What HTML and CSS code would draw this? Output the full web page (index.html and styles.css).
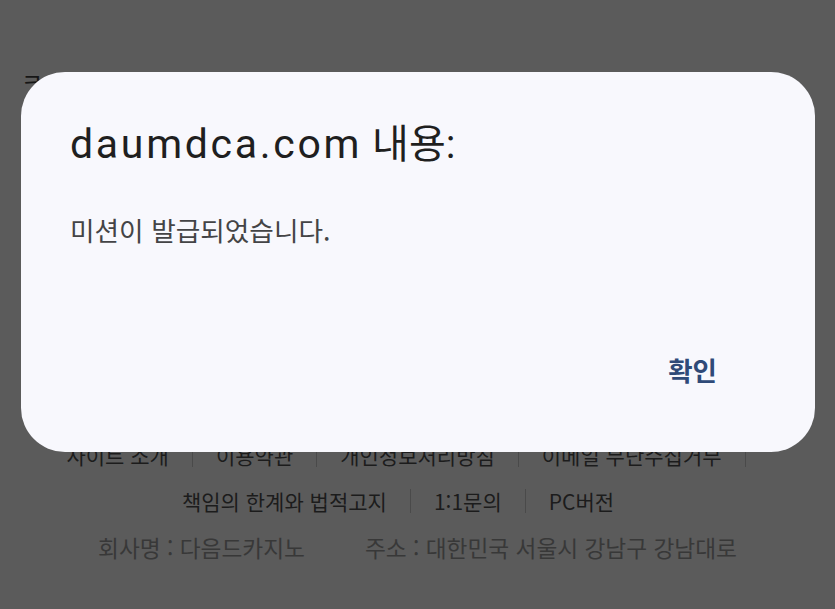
FILE: index.html
```html
<!DOCTYPE html>
<html lang="ko">
<head>
<meta charset="utf-8">
<link rel="stylesheet" href="styles.css">
</head>
<body>
<div class="page">
  <div class="logo">ㅋ</div>
  <div class="footer">
    <div class="links row1">
      <span class="lnk">사이트 소개</span>
      <span class="lnk">이용약관</span>
      <span class="lnk">개인정보처리방침</span>
      <span class="lnk">이메일 무단수집거부</span>
      <span class="lnk empty"></span>
    </div>
    <div class="links row2">
      <span class="lnk">책임의 한계와 법적고지</span>
      <span class="lnk">1:1문의</span>
      <span class="lnk last">PC버전</span>
    </div>
    <div class="info">
      <span>회사명 : 다음드카지노</span>
      <span>주소 : 대한민국 서울시 강남구 강남대로</span>
    </div>
  </div>
</div>
<div class="dialog">
  <div class="title"><span class="host">daumdca.com</span> 내용:</div>
  <div class="message">미션이 발급되었습니다.</div>
  <div class="actions">
    <button class="ok">확인</button>
  </div>
</div>
</body>
</html>
```

FILE: styles.css
```css
html, body {
  margin: 0;
  padding: 0;
  height: 100%;
}
body {
  background: #5b5b5b;
  font-family: "Noto Sans CJK KR", "Noto Sans", sans-serif;
  overflow: hidden;
}
.page {
  display: flex;
  flex-direction: column;
  height: 609px;
}
.logo {
  padding: 66px 0 0 21px;
  font-size: 24px;
  line-height: 30px;
  color: #161616;
}
.footer {
  margin-top: 336px;
  display: flex;
  flex-direction: column;
  align-items: center;
}
.links {
  display: flex;
  align-items: center;
  font-size: 21px;
  color: #1c1c1c;
  height: 46px;
}
.row1 {
  padding-right: 46px;
}
.row2 {
  padding-right: 39px;
}
.lnk {
  padding: 0 23px;
  border-left: 1px solid #4a4a4a;
  line-height: 24px;
}
.lnk:first-child {
  border-left: none;
}
.lnk.empty {
  padding: 0;
  height: 24px;
}
.info {
  display: flex;
  gap: 60px;
  font-size: 22.7px;
  color: #383838;
  height: 46px;
  align-items: center;
}
.dialog {
  position: fixed;
  left: 21px;
  top: 72px;
  width: 794px;
  height: 380px;
  box-sizing: border-box;
  background: #f8f8fd;
  border-radius: 44px;
  padding: 44px 49px 0 49px;
  display: flex;
  flex-direction: column;
}
.title {
  font-family: "Roboto", "Noto Sans CJK KR", sans-serif;
  font-size: 40px;
  line-height: 56px;
  color: #1f1f1f;
}
.host {
  font-size: 41px;
  letter-spacing: 2.7px;
}
.message {
  margin-top: 39px;
  font-size: 26.7px;
  line-height: 36px;
  color: #444446;
}
.actions {
  margin-top: 104px;
  display: flex;
  justify-content: flex-end;
}
.ok {
  background: none;
  border: none;
  padding: 0;
  margin-right: 49px;
  font-family: "Noto Sans CJK KR", sans-serif;
  font-weight: 700;
  font-size: 26.5px;
  line-height: 36px;
  color: #2f4a78;
}
```
